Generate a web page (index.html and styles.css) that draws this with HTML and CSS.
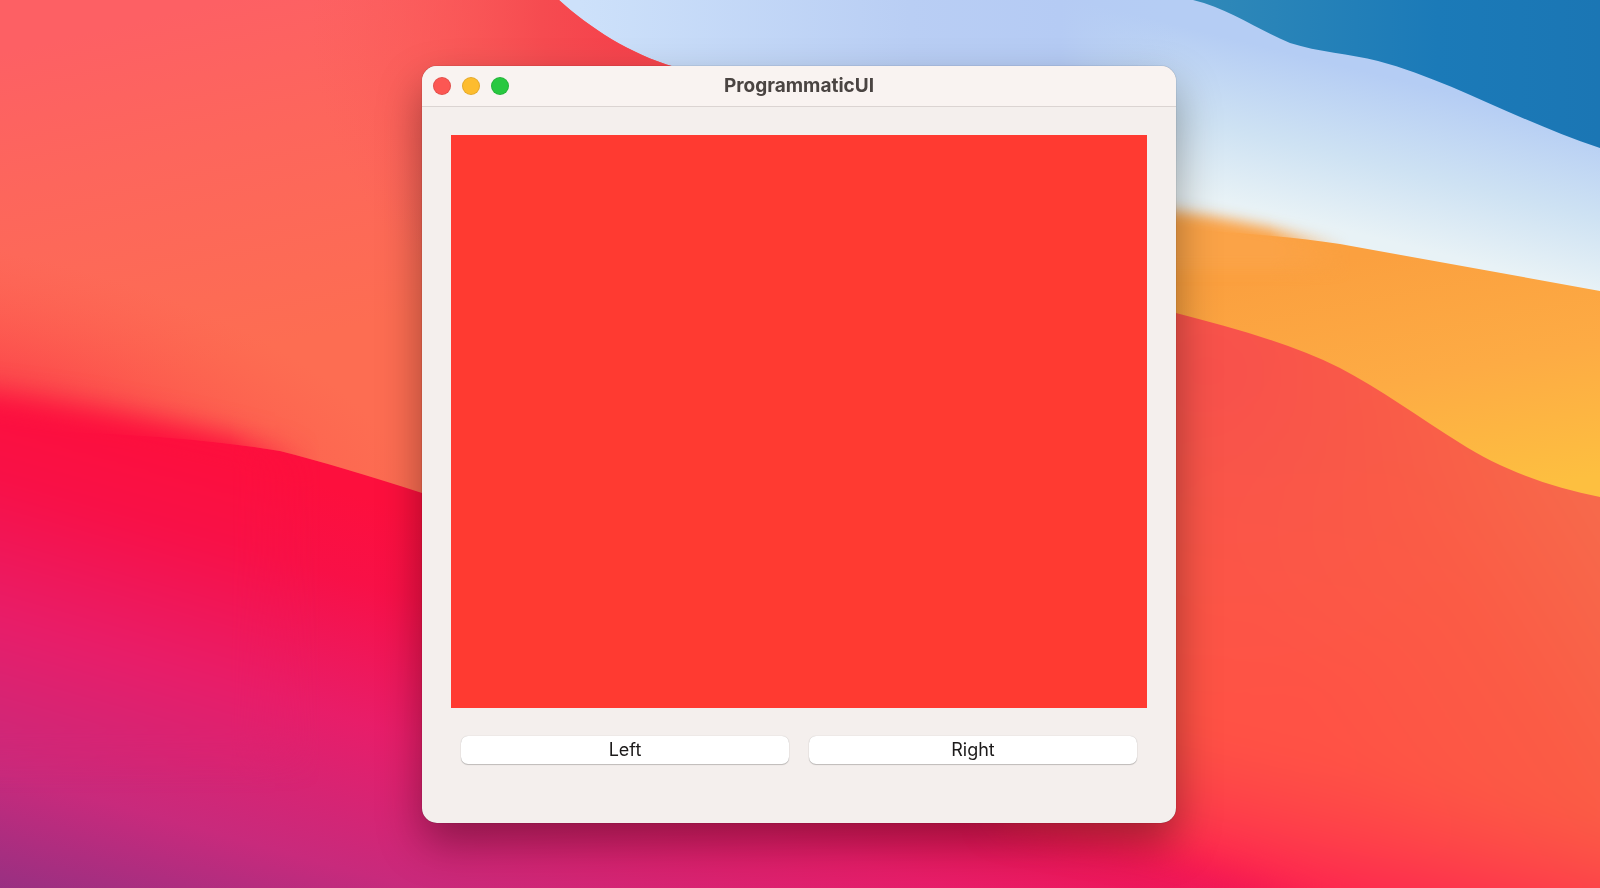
FILE: index.html
```html
<!DOCTYPE html>
<html lang="en">
<head>
  <meta charset="UTF-8">
  <meta name="viewport" content="width=device-width, initial-scale=1">
  <title>ProgrammaticUI</title>
  <link rel="stylesheet" href="styles.css">
</head>
<body>
  <svg class="wallpaper" viewBox="0 0 1600 888" preserveAspectRatio="xMidYMid slice" aria-hidden="true">
    <defs>
      <linearGradient id="magenta" gradientUnits="userSpaceOnUse" x1="340" y1="490" x2="200" y2="990">
        <stop offset="0" stop-color="#fd0f3d"/>
        <stop offset="0.16" stop-color="#f81047"/>
        <stop offset="0.42" stop-color="#e81d69"/>
        <stop offset="0.7" stop-color="#c82a7c"/>
        <stop offset="1" stop-color="#853284"/>
      </linearGradient>
      <linearGradient id="coral" gradientUnits="userSpaceOnUse" x1="220" y1="0" x2="300" y2="340">
        <stop offset="0" stop-color="#fd6064"/>
        <stop offset="0.4" stop-color="#fd665c"/>
        <stop offset="1" stop-color="#fd6d52"/>
      </linearGradient>
      <radialGradient id="coralLeft" gradientUnits="userSpaceOnUse" cx="0" cy="0" r="1" gradientTransform="translate(-20 420) rotate(12) scale(440 170)">
        <stop offset="0" stop-color="#fb2f48"/>
        <stop offset="1" stop-color="#fd5a4c" stop-opacity="0"/>
      </radialGradient>
      <radialGradient id="coralTop" gradientUnits="userSpaceOnUse" cx="640" cy="20" r="330">
        <stop offset="0" stop-color="#f5404b"/>
        <stop offset="0.3" stop-color="#f64b50"/>
        <stop offset="1" stop-color="#fb5c5a" stop-opacity="0"/>
      </radialGradient>
      <linearGradient id="sky" gradientUnits="userSpaceOnUse" x1="1380" y1="75" x2="1342" y2="230">
        <stop offset="0" stop-color="#b5cdf4"/>
        <stop offset="0.55" stop-color="#cee2f3"/>
        <stop offset="1" stop-color="#e8f2f6"/>
      </linearGradient>
      <linearGradient id="skyTop" gradientUnits="userSpaceOnUse" x1="580" y1="0" x2="1180" y2="0">
        <stop offset="0" stop-color="#cde1fa"/>
        <stop offset="0.55" stop-color="#b9cef4"/>
        <stop offset="0.8" stop-color="#b5cbf4"/>
        <stop offset="1" stop-color="#b5cdf4" stop-opacity="0"/>
      </linearGradient>
      <linearGradient id="blue" x1="0" y1="0" x2="1" y2="0">
        <stop offset="0" stop-color="#3089b8"/>
        <stop offset="0.6" stop-color="#1b7ab8"/>
        <stop offset="1" stop-color="#1b76b4"/>
      </linearGradient>
      <linearGradient id="orange" gradientUnits="userSpaceOnUse" x1="1420" y1="245" x2="1470" y2="500">
        <stop offset="0" stop-color="#fba03f"/>
        <stop offset="0.5" stop-color="#fdab44"/>
        <stop offset="1" stop-color="#fdbf40"/>
      </linearGradient>
      <linearGradient id="red" gradientUnits="userSpaceOnUse" x1="1620" y1="500" x2="1300" y2="700">
        <stop offset="0" stop-color="#f66b4c"/>
        <stop offset="0.5" stop-color="#fb5b45"/>
        <stop offset="1" stop-color="#ff5245"/>
      </linearGradient>
      <radialGradient id="redTop" gradientUnits="userSpaceOnUse" cx="1210" cy="370" r="340">
        <stop offset="0" stop-color="#f8504c"/>
        <stop offset="1" stop-color="#f75f49" stop-opacity="0"/>
      </radialGradient>
      <linearGradient id="redBottom" gradientUnits="userSpaceOnUse" x1="1370" y1="760" x2="1340" y2="890">
        <stop offset="0" stop-color="#fd4548" stop-opacity="0"/>
        <stop offset="1" stop-color="#fd284f"/>
      </linearGradient>
      <linearGradient id="fadeOutRight" gradientUnits="userSpaceOnUse" x1="1270" y1="0" x2="1350" y2="0">
        <stop offset="0" stop-color="#fff"/>
        <stop offset="1" stop-color="#000"/>
      </linearGradient>
      <linearGradient id="fadeOutCoral" gradientUnits="userSpaceOnUse" x1="230" y1="0" x2="320" y2="0">
        <stop offset="0" stop-color="#fff"/>
        <stop offset="1" stop-color="#000"/>
      </linearGradient>
      <mask id="softLeft" maskUnits="userSpaceOnUse" x="1000" y="100" width="600" height="400">
        <rect x="1000" y="100" width="600" height="400" fill="url(#fadeOutRight)"/>
      </mask>
      <mask id="softCoral" maskUnits="userSpaceOnUse" x="0" y="200" width="500" height="600">
        <rect y="200" width="500" height="600" fill="url(#fadeOutCoral)"/>
      </mask>
      <filter id="blurSmall" x="-20%" y="-50%" width="140%" height="200%"><feGaussianBlur stdDeviation="7"/></filter>
      <filter id="blurMedium" x="-20%" y="-50%" width="140%" height="200%" color-interpolation-filters="sRGB"><feGaussianBlur stdDeviation="14"/></filter>
      <filter id="blurLarge" x="-20%" y="-50%" width="140%" height="200%" color-interpolation-filters="sRGB"><feGaussianBlur stdDeviation="18"/></filter>
      <path id="redHill" d="M1000 250H1700V1000H1500C1370 925 1270 878 1140 846L1000 820Z"/>
      <path id="coralHill" d="M0 0H559C590 28 630 54 675 67V600C580 545 500 517 422 493C370 476 320 461 280 451C190 436 90 432 0 430Z"/>
    </defs>

    <!-- lower left magenta -->
    <rect width="1600" height="888" fill="url(#magenta)"/>

    <!-- right red hill -->
    <g filter="url(#blurLarge)">
      <use href="#redHill" fill="url(#red)"/>
      <use href="#redHill" fill="url(#redTop)"/>
      <use href="#redHill" fill="url(#redBottom)"/>
    </g>

    <!-- sky and blue corner -->
    <path d="M500 0H1600V300L1176 260L500 200Z" fill="url(#sky)"/>
    <rect x="500" width="680" height="80" fill="url(#skyTop)"/>
    <path d="M1193 0C1230 9 1258 30 1290 43C1318 52 1350 54 1378 61C1450 80 1520 122 1600 148V0Z" fill="url(#blue)"/>

    <!-- orange band -->
    <path d="M1100 224C1200 230 1280 235 1340 244L1600 291V497C1550 487 1500 469 1460 443C1420 418 1380 389 1340 368C1290 343 1230 327 1176 313L1100 295Z" fill="url(#orange)"/>
    <path d="M1060 200C1200 208 1270 228 1340 244L1400 256V270H1060Z" fill="#fba346" filter="url(#blurSmall)" mask="url(#softLeft)"/>

    <!-- left coral hill -->
    <use href="#coralHill" fill="url(#coral)"/>
    <use href="#coralHill" fill="url(#coralTop)"/>
    <use href="#coralHill" fill="url(#coralLeft)"/>
    <path d="M-100 384C70 400 180 422 290 452L400 484V760H-100Z" fill="url(#magenta)" filter="url(#blurMedium)" mask="url(#softCoral)"/>
  </svg>

  <div class="desktop">
    <main class="window">
      <header class="titlebar">
        <div class="controls">
          <button class="dot close" aria-label="Close"></button>
          <button class="dot minimize" aria-label="Minimize"></button>
          <button class="dot zoom" aria-label="Zoom"></button>
        </div>
        <h1 class="title">ProgrammaticUI</h1>
      </header>
      <div class="content">
        <div class="red-view"></div>
        <div class="buttons">
          <button class="push">Left</button>
          <button class="push">Right</button>
        </div>
      </div>
    </main>
  </div>
</body>
</html>
```
FILE: styles.css
```css
* {
  box-sizing: border-box;
}
body {
  margin: 0;
  font-family: Inter, "Liberation Sans", sans-serif;
  background: #e81d69;
}
.wallpaper {
  position: fixed;
  inset: 0;
  width: 100%;
  height: 100%;
}
.desktop {
  position: relative;
  display: flex;
  justify-content: center;
  min-height: 100vh;
  padding: 66px 26px 65px 24px;
}
.window {
  display: flex;
  flex-direction: column;
  width: 100%;
  max-width: 754px;
  border-radius: 15px;
  overflow: hidden;
  background: #f4efed;
  box-shadow: 0 0 1px rgba(0,0,0,0.6), 0 20px 44px rgba(0,0,0,0.36);
}
.titlebar {
  display: grid;
  grid-template-columns: 1fr auto 1fr;
  align-items: center;
  height: 41px;
  padding: 0 11px;
  background: #f9f3f1;
  border-bottom: 1px solid #dbd4d2;
}
.controls {
  display: flex;
  gap: 11px;
}
.dot {
  width: 18px;
  height: 18px;
  padding: 0;
  border: 1px solid rgba(0,0,0,0.1);
  border-radius: 50%;
}
.close { background: #fc5753; }
.minimize { background: #fdbc2e; }
.zoom { background: #28c840; }
.title {
  margin: 0;
  font-size: 19px;
  line-height: 24px;
  font-weight: 700;
  color: #4a4442;
}
.content {
  flex: 1;
  display: flex;
  flex-direction: column;
  gap: 28px;
  padding: 28px 29px 59px;
}
.red-view {
  flex: 1;
  min-height: 200px;
  background: #ff3a31;
}
.buttons {
  display: grid;
  grid-template-columns: 1fr 1fr;
  gap: 20px;
  padding: 0 10px;
}
.push {
  height: 28px;
  padding: 0;
  border: 0;
  border-radius: 7px;
  background: #fff;
  box-shadow: 0 0 1px rgba(0,0,0,0.25), 0 1px 1px rgba(0,0,0,0.2);
  font-family: inherit;
  font-size: 18px;
  line-height: 24px;
  color: #1c1a1a;
}
```
